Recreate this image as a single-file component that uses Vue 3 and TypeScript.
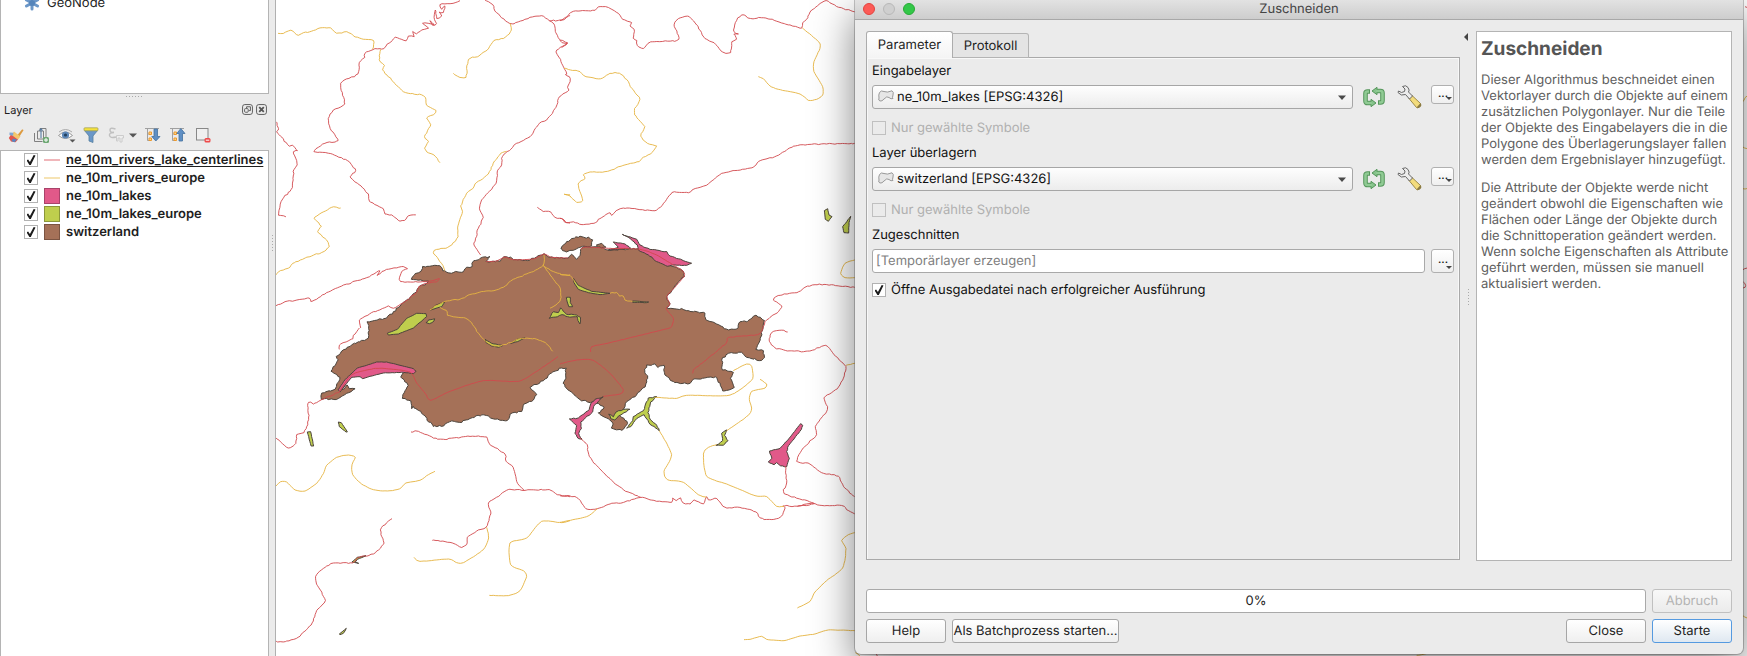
<script setup lang="ts">
import { ref } from 'vue'

type Tone = 'red' | 'yellow'
interface River { tone: Tone; pts: string; rough?: number }
interface Tile { x: number; y: number; rivers: River[] }
interface Shape { kind: 'land' | 'lake' | 'pond'; pts: string; rough?: number }

// Map units are thirds of a pixel. Lines are smoothed, then given a small fixed jitter so they read as natural outlines.
function trace(pts: string, rough: number, closed = false): string {
  const p = pts.trim().split(/\s+/).map(s => s.split(',').map(Number))
  if (closed) p.push(p[0])
  let seed = Math.abs(Math.round(p[0][0] * 31 + p[0][1] * 17)) + 7
  const rnd = () => {
    seed = (seed * 1103515245 + 12345) % 2147483648
    return seed / 2147483648 - 0.5
  }
  let d = `M${p[0][0]} ${p[0][1]}`
  for (let i = 1; i < p.length; i++) {
    const a = p[i - 1]
    const b = p[i]
    const before = p[i - 2] ?? a
    const after = p[i + 1] ?? b
    const n = Math.max(1, Math.round(Math.hypot(b[0] - a[0], b[1] - a[1]) / 7))
    for (let k = 1; k <= n; k++) {
      const t = k / n
      const j = k < n ? rough : rough / 3
      const at = (c: number) => {
        const line = a[c] + (b[c] - a[c]) * t
        if (closed) return line
        const curve = 0.5 * (2 * a[c] + (b[c] - before[c]) * t
          + (2 * before[c] - 5 * a[c] + 4 * b[c] - after[c]) * t * t
          + (3 * a[c] - before[c] - 3 * b[c] + after[c]) * t * t * t)
        return (curve * 2 + line) / 3
      }
      d += `L${(at(0) + rnd() * j).toFixed(1)} ${(at(1) + rnd() * j).toFixed(1)}`
    }
  }
  return closed ? d + 'Z' : d
}

const shapes: Shape[] = [
  { kind: 'land', rough: 5, pts: '424,838 436,820 452,814 458,799 510,797 516,803 518,812 535,818 580,815 590,802 606,800 606,790 612,782 630,775 660,770 648,784 690,784 702,770 722,771 730,779 780,780 804,768 822,761 840,772 895,774 905,762 920,778 930,765 932,748 940,741 985,738 1005,748 1020,752 1050,747 1110,748 1160,775 1190,795 1210,800 1238,812 1244,830 1225,845 1205,872 1190,890 1200,912 1190,924 1240,928 1305,940 1308,960 1340,972 1362,986 1375,990 1405,984 1410,965 1430,965 1450,948 1458,945 1484,962 1480,984 1470,1020 1458,1048 1480,1052 1484,1072 1475,1082 1430,1072 1415,1056 1375,1060 1355,1080 1358,1110 1390,1118 1382,1135 1392,1162 1370,1172 1358,1172 1350,1150 1335,1130 1270,1138 1260,1150 1215,1148 1185,1125 1182,1095 1165,1102 1155,1092 1130,1095 1124,1112 1133,1135 1125,1160 1095,1190 1070,1205 1065,1219 1050,1246 1073,1271 1055,1291 1025,1284 1028,1269 1015,1256 985,1239 1003,1221 980,1209 935,1202 890,1166 880,1149 888,1134 888,1104 875,1104 845,1119 820,1142 780,1162 800,1184 785,1204 762,1212 755,1234 720,1242 712,1262 670,1256 650,1246 625,1246 600,1256 575,1267 545,1262 515,1279 490,1279 465,1249 430,1219 425,1226 423,1202 398,1196 402,1178 415,1156 392,1132 403,1117 385,1104 330,1092 265,1110 235,1138 215,1170 232,1154 238,1166 255,1167 225,1184 205,1196 155,1198 155,1179 195,1167 210,1132 183,1114 205,1079 198,1069 245,1034 295,1014 298,992 292,965 350,955 370,935 405,905 440,875 445,862 470,850 475,843' },
  { kind: 'land', rough: 6, pts: '873,745 890,725 918,710 955,712 968,720 965,738 930,742 910,752 885,754' },
  { kind: 'land', rough: 4, pts: '980,735 995,730 1008,742 982,742' },
  { kind: 'lake', rough: 1, pts: '210,1176 205,1169 225,1139 262,1104 290,1096 320,1086 350,1086 430,1106 438,1114 430,1121 400,1117 340,1119 300,1129 278,1136 270,1130 245,1132 225,1156' },
  { kind: 'lake', rough: 3, pts: '1057,703 1100,718 1110,735 1140,748 1190,755 1200,768 1265,790 1250,796 1215,795 1192,799 1160,785 1135,765 1105,750 1102,735 1075,712' },
  { kind: 'lake', rough: 2, pts: '1015,750 1045,742 1030,726 1065,732 1082,745' },
  { kind: 'lake', rough: 3, pts: '1000,1190 975,1198 962,1212 958,1228 925,1254 898,1257 920,1276 915,1300 925,1316 936,1318 926,1300 934,1286 932,1266 968,1236 974,1214' },
  { kind: 'lake', rough: 2, pts: '1592,1271 1598,1276 1594,1288 1556,1336 1550,1355 1558,1375 1550,1400 1532,1398 1520,1388 1512,1394 1495,1386 1506,1375 1498,1353 1530,1345 1552,1322' },
  { kind: 'pond', rough: 1, pts: '382,988 410,955 440,940 468,941 470,950 430,984 385,1002 355,1005 352,1000' },
  { kind: 'pond', rough: 2, pts: '468,968 476,960 494,956 492,963 478,971' },
  { kind: 'pond', rough: 1, pts: '482,930 496,916 525,905 515,920' },
  { kind: 'pond', rough: 1, pts: '645,1018 665,1030 698,1037 686,1042 665,1038 648,1028' },
  { kind: 'pond', rough: 1, pts: '722,1030 745,1016 765,1014 742,1025' },
  { kind: 'pond', rough: 1, pts: '911,836 925,856 965,874 1020,880 990,884 955,878 925,868 912,848' },
  { kind: 'pond', rough: 1, pts: '1088,903 1136,906 1130,908 1088,907' },
  { kind: 'pond', rough: 2, pts: '889,892 901,892 901,908 908,920 896,920' },
  { kind: 'pond', rough: 3, pts: '838,955 850,935 865,938 872,924 880,934 890,943 920,945 932,952 930,972 924,962 922,950 900,952 876,944 862,950 850,952' },
  { kind: 'pond', rough: 3, pts: '1160,1190 1135,1194 1120,1232 1090,1250 1088,1262 1070,1285 1082,1280 1100,1256 1122,1244 1136,1268 1168,1292 1160,1276 1140,1258 1134,1238 1142,1206' },
  { kind: 'pond', rough: 3, pts: '1016,1242 1022,1256 1034,1260 1046,1248 1080,1228 1060,1228 1038,1236 1030,1250' },
  { kind: 'pond', rough: 2, pts: '1370,1290 1355,1300 1358,1322 1338,1336 1360,1336 1374,1322 1364,1306' },
  { kind: 'pond', rough: 1, pts: '1663,632 1673,626 1677,645 1686,650 1675,664 1666,658' },
  { kind: 'pond', rough: 1, pts: '1742,649 1737,668 1736,699 1722,698 1718,680' },
  { kind: 'pond', rough: 1, pts: '112,1296 122,1295 131,1338 123,1338' },
  { kind: 'pond', rough: 1, pts: '205,1266 214,1268 232,1296 228,1296 208,1280' },
  { kind: 'pond', rough: 1, pts: '208,1902 229,1885 220,1900 210,1904' },
  { kind: 'pond', rough: 1, pts: '246,1686 262,1672 288,1667 262,1678 256,1686 266,1690' },
]

const tiles: Tile[] = [
  { x: 0, y: 0, rivers: [
    { tone: 'red', pts: '570,2 555,8 525,12 510,14 515,28 525,18 520,38 508,36 515,48 500,55 496,30 492,52 500,70 488,76 480,62 492,74 475,70 458,70 476,84 455,90 440,102 428,94 432,110 415,108 408,122 375,112 362,126 352,132 342,146 315,146 285,160 284,172 268,188 264,222 212,250 224,312 190,330 175,356 180,385 204,422 165,430 132,455 175,460 232,482 257,512 240,530 262,550 295,582 298,604 340,626 345,642 365,645 385,661 403,661 415,648 437,645' },
    { tone: 'red', rough: 4, pts: '18,365 25,390 20,395 58,438 68,436 82,452 70,455 82,495 72,508 70,540 64,568 42,592 30,618 25,645 48,650' },
    { tone: 'red', pts: '645,0 668,14 680,38 718,70 745,66 780,52 815,47 838,62 852,72 856,94 876,128 893,130 860,150 862,164 872,178 878,196 890,222 886,224 898,230 900,245 893,262 897,270 868,290 858,322 830,360 808,370 780,410 740,430 718,452 702,462 695,475 695,495 682,512 678,550 635,600 628,625 640,652 622,690 620,710 612,735 632,765' },
    { tone: 'red', pts: '838,62 878,60 900,46' },
    { tone: 'red', pts: '802,622 820,634 842,636 855,652 875,656 888,668 900,670' },
    { tone: 'red', pts: '18,917 45,905 75,902 118,894 122,904 135,900 170,878 215,858 262,842 290,833 330,812 322,826 350,808 400,800 412,806 395,815 388,838 392,845 430,846 480,843 508,836 500,846 470,850 446,860 440,876 405,905 370,925 355,918 330,930 305,938 268,960 272,984' },
    { tone: 'red', rough: 1, pts: '648,785 680,783 705,771 730,779 790,777 822,762 845,772 895,774' },
    { tone: 'yellow', pts: '24,100 40,100 62,91 85,106 100,98 125,94 150,84 182,84 200,100 230,95 250,107 280,118 311,122 308,148' },
    { tone: 'yellow', pts: '332,148 328,180 343,196 338,210 370,245 395,270 415,280 455,284 466,292 470,315 498,332 490,345 470,354 482,374 464,410 475,425 464,445 470,456 492,465 510,488' },
    { tone: 'yellow', pts: '720,70 724,90 706,112 672,122 652,150 622,170 595,178 588,232 570,232 550,220' },
    { tone: 'yellow', pts: '710,454 692,460 670,490 655,522 615,552 608,566 590,580 572,618 578,634 564,678 564,710 545,735 528,745 500,748 490,758 514,790 524,812' },
    { tone: 'yellow', pts: '212,624 185,622 160,636 132,655 154,678 143,695 170,720 178,740 155,758 130,765 68,790 60,802 32,812 18,824' },
    { tone: 'yellow', pts: '822,765 820,796 790,815 730,838 700,862 672,872 635,875 600,884 570,898 525,904 480,930' },
    { tone: 'yellow', pts: '818,796 850,815 880,825 900,825' },
    { tone: 'yellow', pts: '820,796 850,838 872,870 870,904 840,924' },
    { tone: 'yellow', pts: '510,922 532,935 532,946 585,954 605,968 625,1000 655,1030 690,1038 755,1015 800,1018 830,1032 848,1054' },
    { tone: 'yellow', pts: '883,583 900,584' },
  ] },
  { x: 870, y: 0, rivers: [
    { tone: 'red', pts: '0,62 22,50 40,34 105,31 115,20 145,22 180,45 188,58 215,68 210,78 222,88 220,115 230,122 232,136 250,146 272,126 350,122 355,105 342,75 355,56 388,50 410,75 435,115 462,128 488,156 512,158 516,125 530,118 522,102 535,102 522,95 526,68 545,45 572,55 618,54 690,75 725,84 728,68 740,58 755,30 798,2 830,20 884,35' },
    { tone: 'red', pts: '0,120 22,128 5,142' },
    { tone: 'red', pts: '0,655 12,660 18,668 40,665 66,674 106,668 115,658 150,638 155,646 165,636 190,624 290,630 336,578 385,578 402,567 445,552 485,520 580,502 596,484 650,468 690,444 730,434 884,430' },
    { tone: 'red', pts: '884,862 840,858 800,854 765,854 735,862 715,876 655,886 640,900 666,918 655,935 620,960 600,1000 560,1008 505,1012 498,1030 460,1062 400,1110 398,1120' },
    { tone: 'red', rough: 1, pts: '62,748 75,741 145,745 240,748 290,765 340,795 368,812 372,830 335,872 320,890 330,912 318,926 340,955 335,980 322,986 240,1006 150,1028 95,1040 92,1056' },
    { tone: 'yellow', pts: '12,205 60,215 78,230 122,236 150,220 178,220 205,245 215,265 240,298 224,325 224,345 254,380 242,408 262,430 290,438 272,462 250,472 238,485 195,495 135,515 90,516 70,525 75,536 54,552 68,602 50,607 30,588 12,582' },
    { tone: 'yellow', rough: 1, pts: '727,84 776,125 780,145 762,185 762,215 788,260 788,285 770,298 745,301 720,282 655,268 630,258 610,236 595,230' },
    { tone: 'yellow', rough: 1, pts: '884,780 855,790 842,820 855,833 884,833' },
    { tone: 'yellow', pts: '0,822 30,826 45,848' },
    { tone: 'yellow', pts: '150,880 170,878 178,888 190,888 195,900 218,904' },
  ] },
  { x: 0, y: 984, rivers: [
    { tone: 'red', pts: '268,0 250,22 248,32 208,52 208,64' },
    { tone: 'red', pts: '18,330 55,360 78,346 80,320 102,314 116,275 113,228 122,222 130,228 155,215 208,192' },
    { tone: 'red', rough: 1, pts: '208,192 245,140 310,122 350,122 420,132 440,165 465,195 482,217 540,190 640,158 745,160 800,130 864,86' },
    { tone: 'red', pts: '423,312 445,310 490,330 520,334 600,325 650,327 658,348 705,378 708,400 730,418 740,460 762,487' },
    { tone: 'red', pts: '487,637 540,643 575,658 590,650 592,628 625,606 648,598 662,558 655,525 680,508 715,485 762,487 838,485 862,500 900,506' },
    { tone: 'red', pts: '366,572 335,598 333,620 342,645 310,678 265,688 248,705 190,705 155,725 137,746 140,768 166,818 140,848 126,885 84,928 40,942 18,940' },
    { tone: 'yellow', rough: 1, pts: '18,474 32,461 50,462 75,486 105,489 140,466 160,437 170,412 200,388 235,381 256,388 246,410 248,440 275,468 310,485 352,489 388,483 408,465 450,457 470,443 495,430' },
    { tone: 'yellow', rough: 1, pts: '432,688 450,700 535,693 560,704 580,704 640,665 656,630 650,598' },
    { tone: 'yellow', rough: 1, pts: '658,802 715,803 750,788 770,745 760,728 722,710 720,645 770,630 815,580 875,584 900,578' },
  ] },
  { x: 870, y: 984, rivers: [
    { tone: 'red', rough: 1, pts: '0,108 50,96 100,97 150,136 190,185 180,198 130,205' },
    { tone: 'red', pts: '60,330 82,350 84,372 98,400 150,452 190,485 242,508' },
    { tone: 'red', pts: '0,503 50,508 78,542 112,542 150,528 190,523 242,508 290,520 335,523 338,510 348,518 362,510 370,525 390,528 402,516 430,528 440,506 445,516 470,512 495,538 540,538 588,552 600,570 635,575 665,565 675,540 670,533 712,535 762,526 672,497 680,465 676,415' },
    { tone: 'red', pts: '712,535 740,528 762,526 780,532 845,532 860,545 884,557' },
    { tone: 'red', pts: '683,12 665,7 635,14 628,40 645,60 690,69 750,69 798,52 822,80 858,115 850,150 832,182 792,210 802,245 766,295 770,320 730,360 710,400 750,408 785,434 835,445 850,475 884,506' },
    { tone: 'yellow', rough: 1, pts: '858,112 884,106' },
    { tone: 'yellow', rough: 1, pts: '285,208 350,211 380,202 500,203 540,185 578,152 575,115 560,108 520,128' },
    { tone: 'yellow', rough: 1, pts: '600,154 620,168 615,180 575,190 568,215 575,240 565,262 500,308' },
    { tone: 'yellow', rough: 1, pts: '298,308 335,380 312,430 322,455 370,463 415,500 440,508' },
    { tone: 'yellow', rough: 1, pts: '470,350 445,358 430,378 440,445 500,468 585,503 620,506 650,535 672,535' },
    { tone: 'yellow', rough: 1, pts: '0,583 80,566 112,542' },
    { tone: 'yellow', rough: 1, pts: '884,614 865,620 845,638 858,662 848,720 800,758 765,792 750,820 712,840' },
    { tone: 'yellow', rough: 1, pts: '552,935 570,934 605,925 620,934 672,938 720,924 765,918 805,906 884,908' },
  ] },
  { x: 0, y: 0, rivers: [
    { tone: 'red', pts: '4425,20 4431,22' },
    { tone: 'yellow', pts: '4417,306 4431,288' },
    { tone: 'yellow', pts: '4417,440 4431,446' },
    { tone: 'yellow', pts: '4417,566 4431,566' },
    { tone: 'red', pts: '4417,810 4431,804' },
    { tone: 'red', pts: '4420,846 4427,856 4420,864' },
    { tone: 'yellow', pts: '1756,1958 1770,1968' },
    { tone: 'red', pts: '1818,1958 1822,1968' },
    { tone: 'yellow', pts: '3440,1966 3470,1960' },
    { tone: 'yellow', pts: '4417,1846 4431,1854' },
  ] },
]

interface Layer { name: string; swatch: string; line: boolean; active: boolean; on: boolean }
const layers = ref<Layer[]>([
  { name: 'ne_10m_rivers_lake_centerlines', swatch: 'rose', line: true, active: true, on: true },
  { name: 'ne_10m_rivers_europe', swatch: 'sand', line: true, active: false, on: true },
  { name: 'ne_10m_lakes', swatch: 'pink', line: false, active: false, on: true },
  { name: 'ne_10m_lakes_europe', swatch: 'lime', line: false, active: false, on: true },
  { name: 'switzerland', swatch: 'brown', line: false, active: false, on: true },
])

const inputs = [
  { id: 'input-layer', label: 'Eingabelayer', value: 'ne_10m_lakes [EPSG:4326]' },
  { id: 'overlay-layer', label: 'Layer überlagern', value: 'switzerland [EPSG:4326]' },
]
const openAfter = ref(true)
</script>

<template>
  <div class="desktop">
    <aside class="side">
      <div class="browser">
        <svg class="node-icon" viewBox="0 0 16 16" aria-hidden="true">
          <g stroke="#6b97c8" stroke-width="3" stroke-linecap="round"><path d="M8 2v12M2.500 5l11 6M2.500 11l11-6" /></g>
          <circle cx="8" cy="8" r="3" fill="#5585bb" />
        </svg>
        <span>GeoNode</span>
      </div>
      <div class="grip-h"></div>
      <header class="panel-head">
        <span>Layer</span>
        <button class="mini" aria-label="Abdocken">
          <svg viewBox="0 0 12 12"><rect x=".6" y=".6" width="10.8" height="10.8" rx="2.5" /><rect x="2.8" y="5" width="4" height="4" rx="1" /><path d="M5 4.5V3h4.200v4.200H7.500" /></svg>
        </button>
        <button class="mini" aria-label="Schließen">
          <svg viewBox="0 0 12 12"><rect x=".6" y=".6" width="10.8" height="10.8" rx="2.5" /><path stroke-width="2" d="M3.500 3.500l5 5M8.500 3.500l-5 5" /></svg>
        </button>
      </header>
      <div class="tools">
        <button aria-label="Layergestaltung">
          <svg viewBox="0 0 16 16"><path d="M9.500 8l4.500-5.500q1.500-.5 1.300 1L11.500 9.500z" fill="#dd9a3e" /><path d="M6 4.500l6.500 5L10 12.500 3.500 8z" fill="#f4c86d" /><path d="M3 7.500l7 5-2.500 2.800L3 14.500.8 11z" fill="#e2574b" /><path d="M1.500 5.500l4 .2-.5 3-3.500-.7z" fill="#7ea6d4" /><path d="M5 11.500l4 1-2.500 2.800-3-1.300z" fill="#5a86c0" /></svg>
        </button>
        <button aria-label="Gruppe hinzufügen">
          <svg viewBox="0 0 16 16" fill="none" stroke="#808080"><path d="M1.500 6v8.500h8M4.500 4v8h6V4zM7 4V1.500h6V10" /><path d="M8 11V2M6.500 3.500L8 1.500l1.500 2" stroke="#47709c" /><rect x="10" y="10" width="6" height="6" rx="1.500" fill="#6da873" stroke="none" /><path d="M13 11v4M11 13h4" stroke="#fff" /></svg>
        </button>
        <button aria-label="Kartenthemen">
          <svg viewBox="0 0 16 16"><path d="M.5 8.500q7-7 14 0-7 6-14 0z" fill="#fff" stroke="#999" /><circle cx="7.500" cy="8" r="3.600" fill="#5d87b8" /><circle cx="7.500" cy="8" r="1.600" fill="#24415f" /><path d="M1 5q6.500-5 13 0" fill="none" stroke="#aaa" /><path d="M11.500 12.500h6l-3 3z" fill="#555" /></svg>
        </button>
        <button aria-label="Legende filtern">
          <svg viewBox="0 0 16 16"><path d="M1.500 3.500h13L10 9v6.500l-4-1.500V9z" fill="#6a97c8" stroke="#55809f" stroke-width=".8" /><rect x="1" y=".8" width="14" height="3" rx=".8" fill="#f5e23c" stroke="#9c9a5a" stroke-width=".7" /></svg>
        </button>
        <button aria-label="Ausdrucksfilter" class="wide">
          <svg viewBox="0 0 28 16"><path d="M7.500 2Q2 .2 2 3T6 5.500Q1 5.500 1.500 8.500T8 10" fill="none" stroke="#c0c0c0" stroke-width="1.500" /><path d="M8.500 8.500h7v2.500h-1.500v4h-2v-4h-2v3h-1.500z" fill="#eee" stroke="#ccc" /><path d="M21 6.500h8l-4 4z" fill="#555" /></svg>
        </button>
        <button aria-label="Alle ausklappen">
          <svg viewBox="0 0 16 16"><path d="M0 1.500h14M2.500 2v11.500H5M2.500 7H5" fill="none" stroke="#a0a0a0" /><path d="M4 5h2.500v2.500H4zM4 11h2.500v2.500H4z" fill="#fbd48a" stroke="#ee9a2c" /><path d="M9 2h3.500v7.500H15L10.800 14 6.800 9.500H9z" fill="#5f8fc4" stroke="#44719f" stroke-width=".8" /></svg>
        </button>
        <button aria-label="Alle einklappen">
          <svg viewBox="0 0 16 16"><path d="M0 1.500h14M2.500 2v11.500H5M2.500 7H5" fill="none" stroke="#a0a0a0" /><path d="M4 5h2.500v2.500H4zM4 11h2.500v2.500H4z" fill="#fbd48a" stroke="#ee9a2c" /><path d="M9 14h3.500V6.500H15L10.800 1.500 6.800 6.500H9z" fill="#5f8fc4" stroke="#44719f" stroke-width=".8" /></svg>
        </button>
        <button aria-label="Layer entfernen">
          <svg viewBox="0 0 16 16"><rect x="1.500" y="1.500" width="11.500" height="11.500" fill="#f0f0f0" stroke="#888" /><rect x="9.500" y="11" width="6" height="4.500" rx="1.500" fill="#ee4a4a" /><path d="M10.800 13.200h3.500" stroke="#fff" /></svg>
        </button>
      </div>
      <ul class="tree">
        <li v-for="(l, i) in layers" :key="l.name">
          <input :id="'layer-' + i" v-model="l.on" type="checkbox" class="check" />
          <span class="swatch" :class="[l.swatch, { line: l.line }]"></span>
          <label :for="'layer-' + i" :class="{ active: l.active }">{{ l.name }}</label>
        </li>
      </ul>
    </aside>

    <main class="canvas">
      <svg class="map" viewBox="18 0 4413 1968" preserveAspectRatio="xMinYMin slice" role="img" aria-label="Karte">
        <path v-for="(s, i) in shapes" :key="i" :class="s.kind" :d="trace(s.pts, s.rough ?? 2, true)" />
        <g v-for="(t, i) in tiles" :key="'t' + i" :transform="`translate(${t.x} ${t.y})`">
          <path v-for="(r, k) in t.rivers" :key="k" :class="['river', r.tone]" :d="trace(r.pts, r.rough ?? 3)" />
        </g>
      </svg>

      <section class="dialog" role="dialog" aria-labelledby="dialog-title">
        <header class="titlebar">
          <div class="lights">
            <button class="red" aria-label="Fenster schließen"></button>
            <button class="grey" aria-label="Minimieren"></button>
            <button class="green" aria-label="Maximieren"></button>
          </div>
          <span id="dialog-title">Zuschneiden</span>
        </header>

        <div class="body">
          <div class="params">
            <div class="tabs" role="tablist">
              <button role="tab" aria-selected="true" class="tab current">Parameter</button>
              <button role="tab" aria-selected="false" class="tab">Protokoll</button>
            </div>
            <div class="pane">
              <div v-for="f in inputs" :key="f.id" class="field">
                <label class="caption" :for="f.id">{{ f.label }}</label>
                <div class="row">
                  <div class="combo">
                    <svg class="poly" viewBox="0 0 16 12" aria-hidden="true"><path d="M1.500 2.500Q3 0 6 1.500T14 .8Q16 2 15 5t0 3.500Q13 9.500 11 7.500T6 9Q4 11.500 2 11T1 8Q.3 5 1.500 2.500z" fill="#e6e6e6" stroke="#999" /></svg>
                    <select :id="f.id"><option>{{ f.value }}</option></select>
                    <svg class="arrow" viewBox="0 0 8 5" aria-hidden="true"><path d="M0 .5h8L4 5z" /></svg>
                  </div>
                  <button class="flat" aria-label="Über Layer iterieren">
                    <svg width="22" height="20" viewBox="0 0 22 20" fill="none"><g stroke="#55965b" stroke-width="4.600"><path d="M8 16H4.500q-2 0-2-2V6.500q0-2 2-2H7M14 4h3.500q2 0 2 2v7.500q0 2-2 2H15" /></g><path d="M9 4l5-3.700v7.400zM13 16l-5-3.700v7.400z" fill="#86c38b" stroke="#55965b" /><g stroke="#8fca93" stroke-width="2.600"><path d="M9 16H4.500q-2 0-2-2V6.500q0-2 2-2h1.500M13 4h4.500q2 0 2 2v7.500q0 2-2 2H16" /></g></svg>
                  </button>
                  <button class="flat wrench" aria-label="Erweiterte Optionen">
                    <svg width="25" height="24" viewBox="0 0 25 24"><path d="M12 13.500l3-3 8.500 8q1 2-1 3.500t-3 .5z" fill="#f3dc7c" stroke="#9c8a4a" /><path d="M19.500 22.500l4-4.500q1.500 2 0 3.800t-4 .7z" fill="#8a7a42" /><path d="M5.500 1.500Q9-.5 11 2.500t.5 4.500l4 4-3 3-4-4.500Q4 11.500 1 7.500L1.500 6l3 1.500 3-1L8 4z" fill="#ececec" stroke="#666" /></svg>
                  </button>
                  <button class="more" aria-label="Layer wählen"><b>...</b><i></i></button>
                </div>
                <div class="option off">
                  <input :id="f.id + '-sel'" type="checkbox" class="check" disabled />
                  <label :for="f.id + '-sel'">Nur gewählte Symbole</label>
                </div>
              </div>
              <div class="field last">
                <label class="caption" for="target">Zugeschnitten</label>
                <div class="row">
                  <input id="target" class="text" type="text" placeholder="[Temporärlayer erzeugen]" />
                  <button class="more tall" aria-label="Ausgabe wählen"><b>...</b><i></i></button>
                </div>
                <div class="option open">
                  <input id="open-after" v-model="openAfter" type="checkbox" class="check" />
                  <label for="open-after">Öffne Ausgabedatei nach erfolgreicher Ausführung</label>
                </div>
              </div>
            </div>
          </div>

          <div class="splitter">
            <button aria-label="Hilfe ausblenden"></button>
            <span class="grip-v"></span>
          </div>

          <article class="help">
            <h2>Zuschneiden</h2>
            <p>Dieser Algorithmus beschneidet einen Vektorlayer durch die Objekte auf einem zusätzlichen Polygonlayer. Nur die Teile der Objekte des Eingabelayers die in die Polygone des Überlagerungslayer fallen werden dem Ergebnislayer hinzugefügt.</p>
            <p>Die Attribute der Objekte werde nicht geändert obwohl die Eigenschaften wie Flächen oder Länge der Objekte durch die Schnittoperation geändert werden. Wenn solche Eigenschaften als Attribute geführt werden, müssen sie manuell aktualisiert werden.</p>
          </article>
        </div>

        <footer class="foot">
          <div class="line-row">
            <div class="progress" role="progressbar" aria-valuenow="0" aria-valuemin="0" aria-valuemax="100">0%</div>
            <button class="btn" disabled>Abbruch</button>
          </div>
          <div class="line-row">
            <button class="btn">Help</button>
            <button class="btn batch">Als Batchprozess starten...</button>
            <span class="space"></span>
            <button class="btn">Close</button>
            <button class="btn primary">Starte</button>
          </div>
        </footer>
      </section>
    </main>
  </div>
</template>

<style>
body { margin: 0; }
</style>

<style scoped>
.desktop {
  display: grid;
  grid-template-columns: 276px minmax(0, 1fr);
  min-height: 100vh;
  background: #ebebeb;
  color: #1e1e1e;
  font: 13px/16px Inter, "Liberation Sans", sans-serif;
  text-rendering: geometricPrecision;
  overflow: hidden;
}
.desktop *, .desktop *::before, .desktop *::after { box-sizing: border-box; }
button, input, select { font: inherit; color: inherit; margin: 0; padding: 0; text-rendering: inherit; }
button { border: 0; background: none; }

.side { display: flex; flex-direction: column; padding-right: 6px; border-right: 1px solid #b0b0b0; position: relative; }
.side::after {
  content: ""; position: absolute; right: 2px; top: 235px; width: 1px; height: 16px;
  background: repeating-linear-gradient(#aaa 0 1px, transparent 1px 3px);
}
.browser {
  height: 94px; background: #fff; border: 1px solid #b4b4b4; border-top: 0;
  display: flex; align-items: flex-start; gap: 7px; padding-left: 23px; overflow: hidden;
}
.browser span { margin-top: -5px; }
.node-icon { width: 16px; height: 16px; margin-top: -5px; }
.grip-h {
  width: 17px; height: 1px; margin: 2px auto 0;
  background: repeating-linear-gradient(90deg, #aaa 0 1px, transparent 1px 3px);
}
.panel-head { display: flex; align-items: center; gap: 3px; height: 25px; padding: 0 2px 0 4px; font-size: 11px; }
.panel-head span { flex: 1; }
.mini { width: 11px; height: 11px; display: block; }
.mini svg { width: 11px; height: 11px; display: block; fill: none; stroke: #555; }
.tools { display: flex; align-items: center; gap: 9px; height: 28px; padding: 0 0 3px 8px; }
.tools button { width: 16px; height: 16px; }
.tools button.wide { width: 28px; }
.tools svg { display: block; height: 16px; width: 100%; overflow: visible; }
.tree { flex: 1; margin: 0; padding: 0 0 0 23px; list-style: none; background: #fff; border: 1px solid #b4b4b4; border-bottom: 0; }
.tree li { display: flex; align-items: center; height: 18px; font-weight: 600; white-space: nowrap; }
.swatch { width: 16px; height: 16px; margin: 0 6px; border: 1px solid; flex: none; }
.swatch.line { height: 2px; border: 0; }
.rose { background: #f0b6ba; }
.sand { background: #f6e3b4; }
.pink { background: #e15989; border-color: #a8436a; }
.lime { background: #bfce4d; border-color: #8b963a; }
.brown { background: #a57158; border-color: #7b5442; }
.active { text-decoration: underline; text-underline-offset: 2px; }

.check {
  appearance: none; flex: none; width: 14px; height: 14px; display: grid; place-items: center;
  border: 1px solid #b2b2b2; background: #fff;
}
.check:checked::after {
  content: ""; width: 9px; height: 10px; background: #1c1c1c;
  clip-path: polygon(0 52%, 18% 44%, 38% 70%, 80% 0, 100% 6%, 48% 100%, 32% 100%);
}
.check:disabled { background: #ebebeb; border-color: #c0c0c0; }

.canvas { position: relative; background: #fff; overflow: hidden; }
.map { position: absolute; inset: 0; width: 100%; height: 100%; display: block; }
.river { fill: none; stroke-width: 3; stroke-linejoin: round; stroke-opacity: .9; }
.red.river { stroke: #d2484c; }
.yellow.river { stroke: #e6b440; }
.land, .lake, .pond { stroke: #4c443c; stroke-width: 3; stroke-linejoin: round; }
.land { fill: #a57158; }
.lake { fill: #e15989; }
.pond { fill: #bfce4d; }

.dialog {
  position: absolute; top: 0; left: 579px; right: 4px; bottom: 2px;
  display: flex; flex-direction: column;
  background: #ebebeb; border-radius: 0 0 6px 6px;
  box-shadow: 0 0 0 1px rgba(0, 0, 0, .22), 0 14px 42px rgba(0, 0, 0, .5);
}
.titlebar {
  display: grid; grid-template-columns: 1fr auto 1fr; align-items: center; height: 20px; padding: 0 8px 1px;
  background: linear-gradient(#e2e2e2, #cdcdcd); border-bottom: 1px solid #a8a8a8; color: #444;
}
.lights { display: flex; gap: 8px; }
.lights button { width: 12px; height: 12px; border-radius: 50%; }
.lights .red { background: #fc5b57; border: 1px solid #e2443f; }
.lights .grey { background: #cfcfcf; border: 1px solid #b8b8b8; }
.lights .green { background: #33c748; border: 1px solid #27aa35; }

.body { flex: 1; min-height: 0; display: flex; padding: 11px 11px 0; }
.params { flex: 1; min-width: 0; display: flex; flex-direction: column; padding-bottom: 1px; }
.tabs { display: flex; align-items: flex-end; height: 27px; position: relative; z-index: 1; margin-bottom: -1px; }
.tab { height: 25px; width: 76px; border: 1px solid #b4b4b4; border-left: 0; background: #e4e4e4; border-radius: 0 3px 0 0; }
.tab.current { height: 27px; width: 87px; background: linear-gradient(#fff, #f4f4f4); border: 1px solid #acacac; border-bottom: 0; border-radius: 3px 3px 0 0; }
.pane { flex: 1; border: 1px solid #a9a9a9; padding: 5px; box-shadow: inset 1px 1px #f8f8f8, inset -1px 0 #f8f8f8; color: #111; }
.field { height: 82px; }
.caption { display: block; height: 22px; }
.row { display: flex; align-items: flex-start; gap: 6px; }
.combo { flex: 1; position: relative; margin-right: 4px; }
.combo select {
  display: block; width: 100%; height: 24px; padding-left: 24px; appearance: none;
  border: 1px solid #a6a6a6; border-radius: 3px; background: linear-gradient(#fefefe, #ececec);
}
.poly { position: absolute; left: 6px; top: 5px; width: 16px; height: 12px; }
.arrow { position: absolute; right: 7px; top: 10px; width: 8px; height: 5px; fill: #4a4a4a; }
.flat { width: 22px; height: 24px; display: grid; place-items: center; }
.flat.wrench { width: 25px; margin: 0 3px 0 6px; }
.flat svg { display: block; }
.more {
  position: relative; width: 23px; height: 19px; border: 1px solid #b0b0b0; border-radius: 3px;
  background: linear-gradient(#fff, #efefef);
}
.more.tall { height: 24px; }
.more b { position: absolute; left: 6px; bottom: 4px; font-size: 10px; line-height: 10px; }
.more.tall b { bottom: 7px; }
.more i { position: absolute; right: 1px; bottom: 3px; border: solid transparent; border-width: 3px 3px 0; border-top-color: #444; }
.text { flex: 1; min-width: 0; height: 24px; border: 1px solid #a9a9a9; border-radius: 3px; padding: 0 3px; background: #fff; }
.text::placeholder { color: #808080; opacity: 1; }
.option { display: flex; align-items: center; gap: 5px; margin-top: 11px; }
.option.open { margin-top: 9px; }
.option.off { color: #b0b0b0; }

.splitter { width: 16px; position: relative; }
.splitter button { position: absolute; left: 4px; top: 2px; border: solid transparent; border-width: 4px 4px 4px 0; border-right-color: #444; }
.grip-v {
  position: absolute; left: 8px; top: 50%; width: 1px; height: 17px; margin-top: -7px;
  background: repeating-linear-gradient(#aaa 0 1px, transparent 1px 3px);
}
.help { width: 256px; border: 1px solid #b4b4b4; background: #fff; padding: 6px 0 6px 4px; color: #606060; }
.help h2 { margin: 0 0 12px; font-size: 19px; line-height: 22px; font-weight: 700; color: #555; }
.help p { margin: 0 0 12px; }

.foot { padding: 28px 11px 11px; display: flex; flex-direction: column; gap: 6px; }
.line-row { display: flex; gap: 6px; }
.progress { flex: 1; height: 24px; line-height: 22px; text-align: center; background: #fff; border: 1px solid #a9a9a9; border-radius: 3px; }
.btn { width: 80px; height: 24px; border: 1px solid #a6a6a6; border-radius: 3px; background: linear-gradient(#fff, #efefef); white-space: nowrap; }
.btn.batch { width: 167px; }
.btn:disabled { color: #b4b4b4; border-color: #c0c0c0; background: linear-gradient(#f8f8f8, #ebebeb); }
.btn.primary { border-color: #559ae0; background: linear-gradient(#fff, #dfe8f1); }
.space { flex: 1; }
</style>
